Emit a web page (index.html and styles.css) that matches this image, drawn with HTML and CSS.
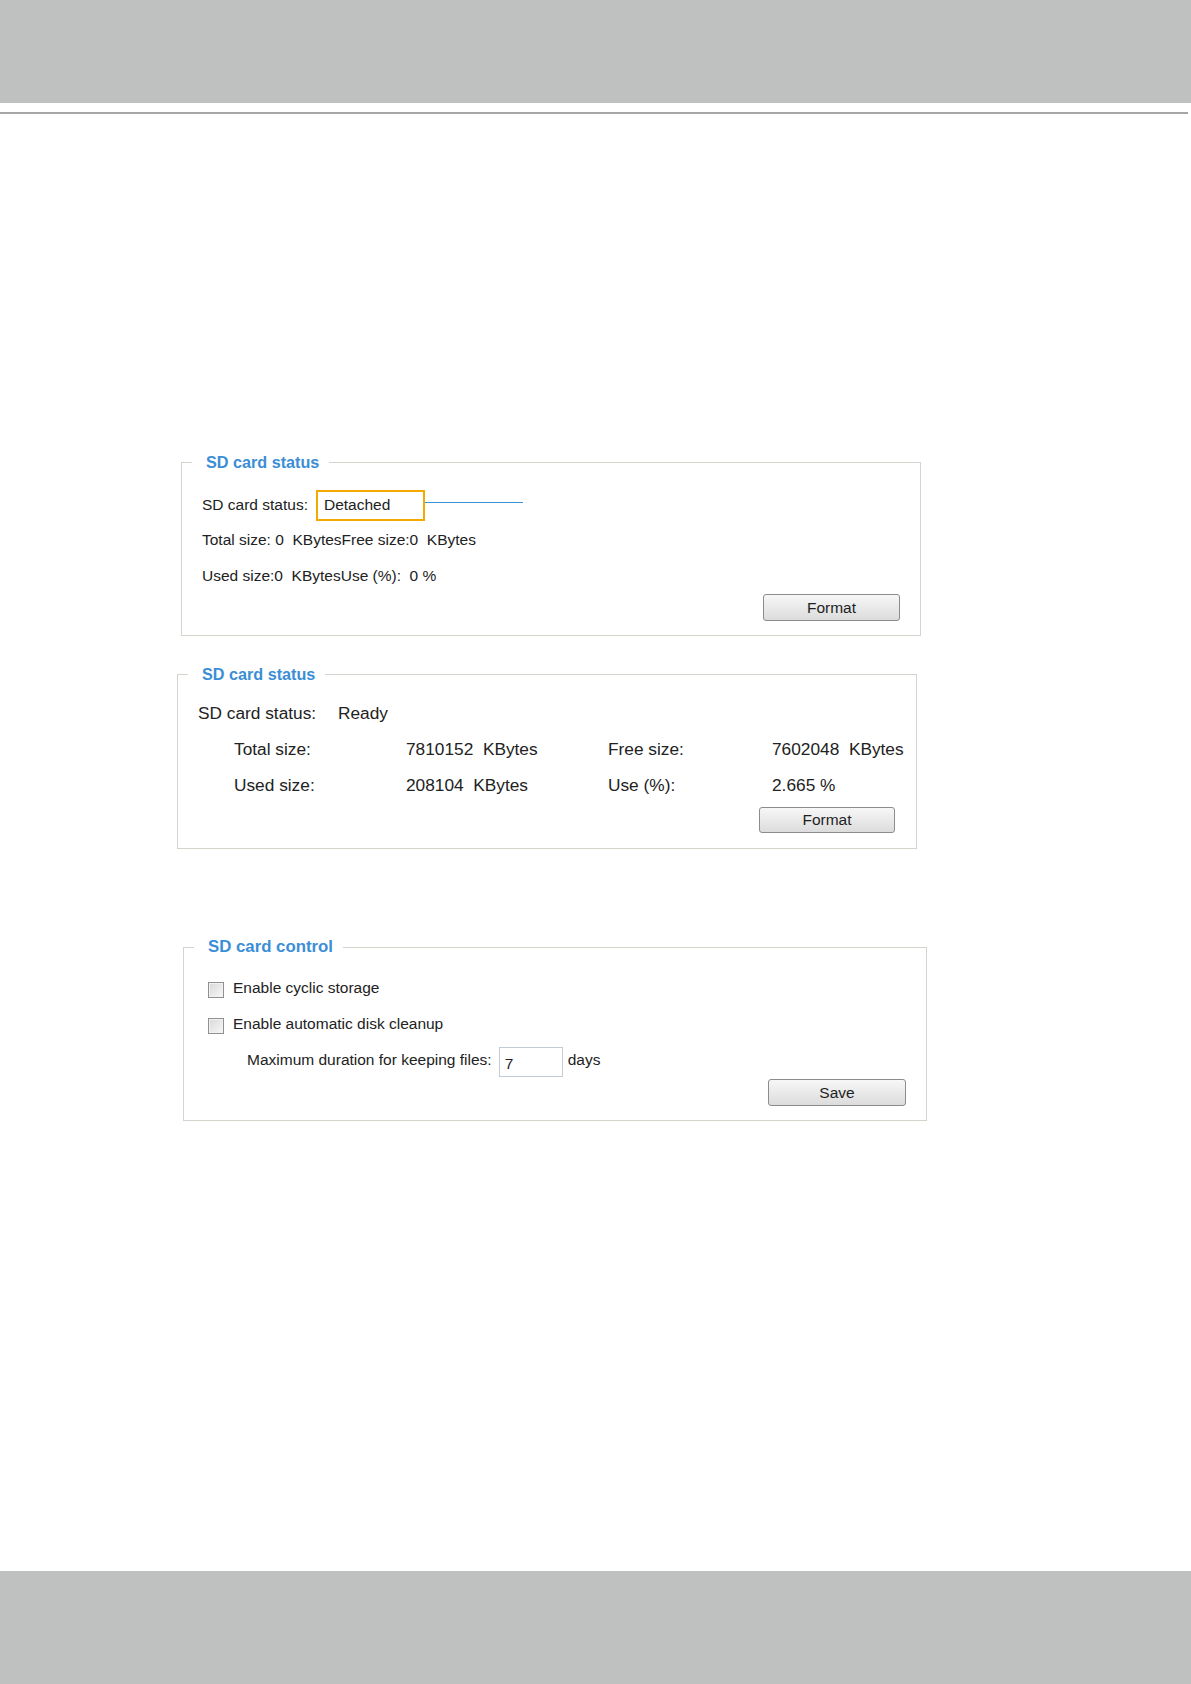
FILE: index.html
```html
<!DOCTYPE html>
<html lang="en">
<head>
    <meta charset="UTF-8">
    <meta name="viewport" content="width=device-width, initial-scale=1.0">
    <title>SD card management</title>
    <link rel="stylesheet" href="styles.css">
</head>
<body>

    <header class="top-bar"></header>
    <div class="top-rule"></div>

    <main class="content">

        <!-- status panel: card detached -->
        <fieldset class="panel panel-detached">
            <legend>SD card status</legend>
            <div class="panel-body">
                <div class="row">
                    <span class="label">SD card status:</span>
                    <span class="status-box">Detached</span>
                    <span class="callout-line"></span>
                </div>
                <div class="row">Total size: 0&nbsp;&nbsp;KBytesFree size:0&nbsp;&nbsp;KBytes</div>
                <div class="row">Used size:0&nbsp;&nbsp;KBytesUse (%):&nbsp;&nbsp;0 %</div>
                <div class="actions">
                    <button type="button" class="btn">Format</button>
                </div>
            </div>
        </fieldset>

        <!-- status panel: card ready -->
        <fieldset class="panel panel-ready">
            <legend>SD card status</legend>
            <div class="panel-body">
                <div class="row">
                    <span class="status-label">SD card status:</span>
                    <span>Ready</span>
                </div>
                <div class="row size-grid">
                    <span>Total size:</span>
                    <span>7810152&nbsp;&nbsp;KBytes</span>
                    <span>Free size:</span>
                    <span>7602048&nbsp;&nbsp;KBytes</span>
                </div>
                <div class="row size-grid">
                    <span>Used size:</span>
                    <span>208104&nbsp;&nbsp;KBytes</span>
                    <span>Use (%):</span>
                    <span>2.665 %</span>
                </div>
                <div class="actions">
                    <button type="button" class="btn">Format</button>
                </div>
            </div>
        </fieldset>

        <!-- control panel -->
        <fieldset class="panel panel-control">
            <legend>SD card control</legend>
            <div class="panel-body">
                <label class="row">
                    <input type="checkbox" class="check">
                    <span>Enable cyclic storage</span>
                </label>
                <label class="row">
                    <input type="checkbox" class="check">
                    <span>Enable automatic disk cleanup</span>
                </label>
                <div class="row sub-row">
                    <span>Maximum duration for keeping files:</span>
                    <input type="text" class="days-input" value="7">
                    <span>days</span>
                </div>
                <div class="actions">
                    <button type="button" class="btn">Save</button>
                </div>
            </div>
        </fieldset>

    </main>

    <footer class="bottom-bar"></footer>

</body>
</html>
```

FILE: styles.css
```css
body {
    margin: 0;
    min-height: 100vh;
    display: flex;
    flex-direction: column;
    font-family: "Liberation Sans", Arial, sans-serif;
    color: #222;
    background-color: white;
}
.top-bar {
    height: 103px;
    background-color: #bfc1c0;
}
.top-rule {
    height: 2px;
    margin: 9px 3px 0 0;
    background-color: #a6a6a6;
}
.content {
    padding-top: 337px;
    display: flex;
    flex-direction: column;
}
.bottom-bar {
    margin-top: auto;
    height: 113px;
    background-color: #bfc1c0;
}

/* panels */
.panel {
    margin: 0;
    padding: 0;
    min-width: 0;
    box-sizing: border-box;
    border: 1px solid #d6d3cc;
}
.panel legend {
    margin-left: 10px;
    padding: 0 10px 0 14px;
    line-height: 22px;
    font-size: 16.2px;
    font-weight: bold;
    color: #3b8ed6;
}
.panel-detached {
    width: 740px;
    margin-left: 181px;
    font-size: 15.5px;
}
.panel-ready {
    width: 740px;
    margin: 27px 0 0 177px;
    font-size: 17.3px;
}
.panel-control {
    width: 744px;
    margin: 87px 0 0 183px;
    font-size: 15.5px;
}
.panel-control legend {
    font-size: 16.8px;
}
.panel-body {
    display: flex;
    flex-direction: column;
}
.row {
    display: flex;
    align-items: center;
    height: 36px;
    white-space: nowrap;
}

/* detached */
.panel-detached .panel-body {
    padding: 15px 20px 14px 20px;
}
.panel-detached .row:first-child {
    height: 34px;
}
.label {
    margin-right: 8px;
}
.status-box {
    box-sizing: border-box;
    width: 109px;
    height: 31px;
    padding-left: 6px;
    display: flex;
    align-items: center;
    border: 2px solid #f4a900;
}
.callout-line {
    width: 98px;
    height: 1px;
    margin-bottom: 6px;
    background-color: #3a90d0;
}

/* ready */
.panel-ready .panel-body {
    padding: 10px 21px 15px 20px;
}
.status-label {
    width: 140px;
}
.size-grid {
    display: grid;
    grid-template-columns: 172px 202px 164px auto;
    padding-left: 36px;
}
.panel-ready .actions {
    margin-top: 4px;
}
.panel-ready .btn {
    width: 136px;
    height: 26px;
}

/* control */
.panel-control .panel-body {
    padding: 12px 20px 14px 24px;
}
.check {
    appearance: none;
    -webkit-appearance: none;
    box-sizing: border-box;
    width: 16px;
    height: 16px;
    margin: 4px 9px 0 0;
    border: 1px solid #8f9090;
    background: linear-gradient(135deg, #d8d8d8, #f8f8f8);
    box-shadow: inset 0 0 0 1px #f2f2f2;
}
.sub-row {
    padding-left: 39px;
}
.days-input {
    box-sizing: border-box;
    width: 64px;
    height: 30px;
    margin: 4px 5px 0 7px;
    padding: 4px 5px 0;
    border: 1px solid #c3cbd4;
    font-family: inherit;
    font-size: 15.5px;
    color: #222;
}
.panel-control .actions {
    margin-top: 1px;
}
.panel-control .btn {
    width: 138px;
}

/* buttons */
.actions {
    display: flex;
    justify-content: flex-end;
}
.btn {
    width: 137px;
    height: 27px;
    padding: 0;
    border: 1px solid #8c8c8c;
    border-radius: 3px;
    background: linear-gradient(#f7f7f7, #dcdcdc);
    font-family: inherit;
    font-size: 15.5px;
    color: #1f1f1f;
    cursor: pointer;
}
.btn:hover {
    background: linear-gradient(#ffffff, #e4e4e4);
}
```
